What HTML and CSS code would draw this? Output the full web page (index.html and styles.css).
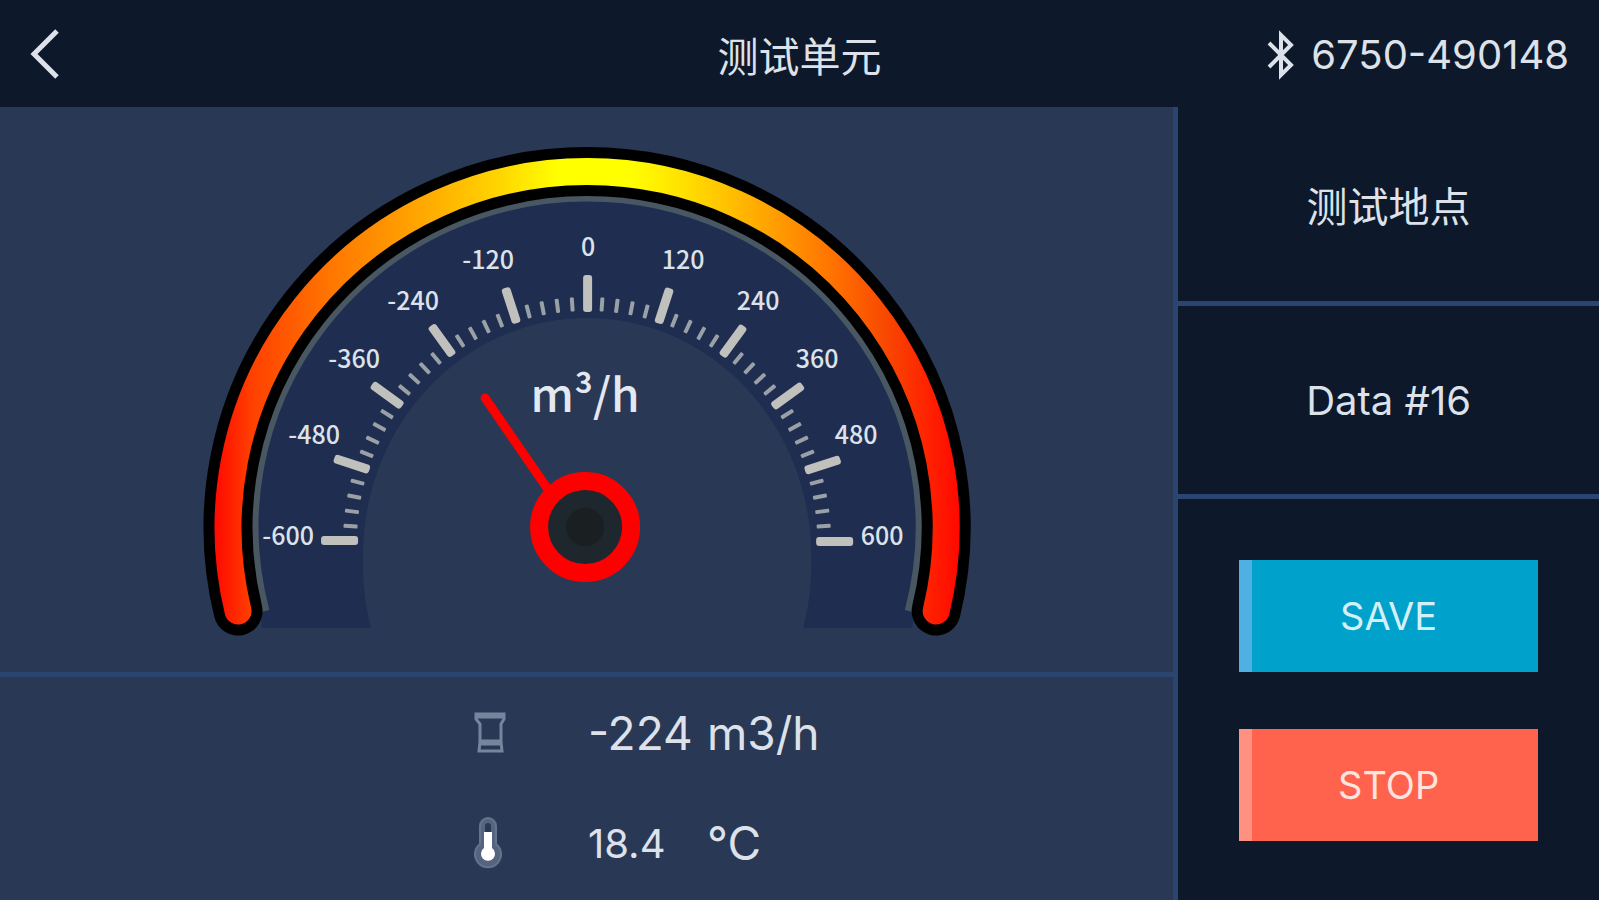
FILE: index.html
```html
<!DOCTYPE html>
<html lang="zh">

<head>
    <meta charset="UTF-8">
    <title>测试单元</title>
    <link rel="stylesheet" href="styles.css">
</head>

<body>
    <header class="header">
        <button class="back" aria-label="返回">
            <svg width="30" height="50" viewBox="0 0 30 50">
                <path d="M27 2 L4 25 L27 48" fill="none" stroke="currentColor" stroke-width="5" />
            </svg>
        </button>
        <h1 class="title">测试单元</h1>
        <div class="device">
            <svg width="28" height="50" viewBox="0 0 28 50">
                <path d="M2 13 L24 35 L14 45 L14 5 L24 15 L2 37" fill="none" stroke="currentColor" stroke-width="4" />
            </svg>
            <span>6750-490148</span>
        </div>
    </header>
    <main class="main">
        <div class="left">
            <div class="gauge">
                <svg class="gauge_svg" viewBox="0 0 1173 565">
                    <defs>
                        <linearGradient id="heat" gradientUnits="userSpaceOnUse" x1="214" y1="0" x2="960" y2="0">
                            <stop offset="0" stop-color="#ff0800" />
                            <stop offset="0.05" stop-color="#ff4000" />
                            <stop offset="0.16" stop-color="#ff7800" />
                            <stop offset="0.26" stop-color="#ffa000" />
                            <stop offset="0.38" stop-color="#ffd400" />
                            <stop offset="0.46" stop-color="#ffff00" />
                            <stop offset="0.56" stop-color="#ffff00" />
                            <stop offset="0.63" stop-color="#ffe000" />
                            <stop offset="0.73" stop-color="#ffaa00" />
                            <stop offset="0.84" stop-color="#ff6c00" />
                            <stop offset="0.9" stop-color="#f84800" />
                            <stop offset="0.96" stop-color="#ff2000" />
                            <stop offset="1" stop-color="#ff0800" />
                        </linearGradient>
                    </defs>
                    <!-- dial -->
                    <path d="M262 521 C258 490 254 455 254 420 A333 330 0 0 1 920 420 C920 455 916 490 912 521 L803 521 A224 237 0 0 0 811 448 A224 237 0 0 0 363 448 A224 237 0 0 0 371 521 Z" fill="#1f2e50" />
                    <path d="M265 504 A333 330 0 1 1 909 504" fill="none" stroke="#485761" stroke-width="9" />
                    <path d="M238 504 A359 356 0 1 1 936 504" fill="none" stroke="#000" stroke-width="49" stroke-linecap="round" />
                    <path d="M238 504 A359 356 0 1 1 936 504" fill="none" stroke="url(#heat)" stroke-width="27" stroke-linecap="round" />
                    <g id="ticks"></g>
                    <text class="unit" x="585" y="305">m³/h</text>
                    <!-- needle -->
                    <path d="M485 291 L549 384" stroke="#f00" stroke-width="9" stroke-linecap="round" />
                    <circle cx="585" cy="420" r="46" fill="#1e272e" stroke="#f00" stroke-width="18" />
                    <circle cx="585" cy="420" r="19" fill="#1a1f22" />
                </svg>
            </div>
            <div class="readings">
                <svg width="32" height="42" viewBox="0 0 32 42">
                    <path d="M2 2 H30 V7 L27 12 V30 L28 39 H5 L6 30 V12 L2 7 Z M3 5 H29 M6 29 H27 M6 32 H27" fill="none" stroke="#77849d" stroke-width="3" />
                </svg>
                <span class="value">-224</span>
                <span class="value">m3/h</span>
                <svg width="28" height="54" viewBox="0 0 28 54">
                    <path d="M6 28 V10 A8 8 0 0 1 22 10 V28 A13 13 0 1 1 6 28 Z" fill="#56647f" stroke="#66738d" stroke-width="2" />
                    <path d="M11 16 V10 A3 3 0 0 1 17 10 V16 Z" fill="#293854" />
                    <path d="M10 16 H18 V32 A7 7 0 1 1 10 32 Z" fill="#fff" />
                </svg>
                <span class="value small">18.4</span>
                <span class="value">°C</span>
            </div>
        </div>
        <div class="side">
            <div class="side_item place">测试地点</div>
            <div class="side_item">Data #16</div>
            <div class="buttons">
                <button class="btn save">SAVE</button>
                <button class="btn stop">STOP</button>
            </div>
        </div>
    </main>
    <script>
        const ticks = document.getElementById('ticks')
        const cx = 587
        const cy = 434
        const labels = [
            [-600, 288, 438], [-480, 314, 337], [-360, 354, 261], [-240, 413, 203], [-120, 488, 162],
            [0, 588, 149],
            [120, 683, 162], [240, 758, 203], [360, 817, 261], [480, 856, 337], [600, 882, 438]
        ]
        let html = ''
        // 50 steps of 24 m3/h, every fifth one is long
        for (let i = 0; i <= 50; i++) {
            const deg = -90 + i * 3.6
            if (i % 5 === 0) {
                html += `<rect class="major" x="${cx - 4}" y="${cy - 266}" width="9" height="37" rx="3" transform="rotate(${deg} ${cx} ${cy})" />`
            } else {
                html += `<rect class="minor" x="${cx - 2}" y="${cy - 244}" width="4" height="14" rx="1" transform="rotate(${deg} ${cx} ${cy})" />`
            }
        }
        labels.forEach(([value, x, y]) => {
            html += `<text class="label" x="${x}" y="${y}">${value}</text>`
        })
        ticks.innerHTML = html
    </script>
</body>

</html>
```
FILE: styles.css
```css
* {
    margin: 0;
    padding: 0;
    box-sizing: border-box;
}

body {
    min-height: 100vh;
    display: flex;
    flex-direction: column;
    background-color: #0d182b;
    color: #dde2ea;
    font-family: Inter, "Noto Sans CJK SC", sans-serif;
    font-size: 40px;
}

button {
    border: none;
    font: inherit;
    color: inherit;
    cursor: pointer;
}

svg {
    display: block;
}

.header {
    height: 107px;
    display: grid;
    grid-template-columns: 1fr auto 1fr;
    align-items: center;
    padding: 0 30px;
}

.back {
    justify-self: start;
    background: none;
}

.title {
    font-size: 41px;
    font-weight: 400;
}

.device {
    justify-self: end;
    display: flex;
    align-items: center;
    gap: 16px;
    padding-top: 2px;
}

.main {
    flex: 1;
    display: grid;
    grid-template-columns: 14fr 5fr;
}

.left {
    display: flex;
    flex-direction: column;
    background-color: #293854;
    border-right: 5px solid #2c4570;
}

.gauge {
    flex: 1;
    border-bottom: 5px solid #2c4570;
}

.gauge_svg {
    width: 100%;
}

.major {
    fill: #c0c0bc;
}

.minor {
    fill: #99a0a6;
}

.label {
    font-family: "Noto Sans CJK SC", sans-serif;
    font-size: 25px;
    font-weight: 500;
    fill: #dde2ea;
    text-anchor: middle;
}

.unit {
    font-family: "Noto Sans CJK SC", sans-serif;
    font-size: 46px;
    font-weight: 500;
    fill: #e4e8f0;
    text-anchor: middle;
}

.readings {
    height: 223px;
    display: grid;
    grid-template-columns: 114px 119px auto;
    grid-auto-rows: 110px;
    align-items: center;
    justify-content: start;
    padding-left: 474px;
    padding-top: 1px;
}

.value {
    font-size: 46px;
    white-space: nowrap;
}

.small {
    font-size: 40px;
}

.side {
    display: flex;
    flex-direction: column;
}

.side_item {
    height: 193px;
    display: flex;
    align-items: center;
    justify-content: center;
    border-bottom: 5px solid #2c4570;
}

.place {
    height: 199px;
    font-size: 41px;
}

.buttons {
    flex: 1;
    display: flex;
    flex-direction: column;
    align-items: center;
    justify-content: center;
    gap: 57px;
    padding-top: 2px;
}

.btn {
    width: 71%;
    height: 112px;
    font-size: 38px;
}

.save {
    background-color: #00a1cb;
    box-shadow: inset 13px 0 #4fb0e2;
    color: #d4f0f8;
}

.stop {
    background-color: #ff624d;
    box-shadow: inset 13px 0 #ff9180;
    color: #ffe4df;
}
```
